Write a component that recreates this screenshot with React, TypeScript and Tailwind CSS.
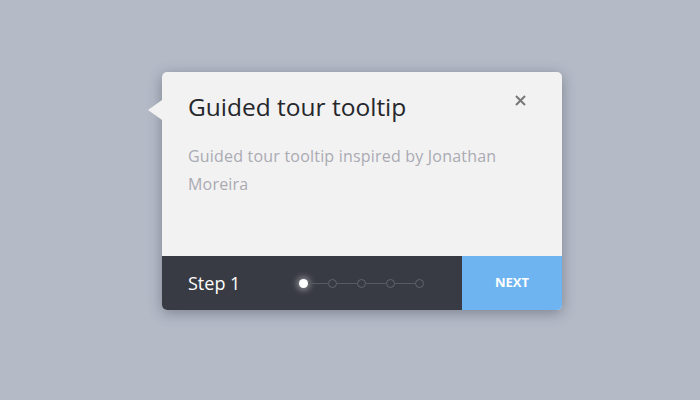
import React from "react";

export default function App() {
  const dots = [0, 1, 2, 3, 4];
  return (
    <div className="w-[700px] h-[400px] bg-[#b5bac7] flex items-start pl-[162px] pt-[72px]" style={{ fontFamily: "'Open Sans', Lato, sans-serif" }}>
      <div className="relative w-[400px] h-[238px] rounded-[5px] bg-[#f2f2f2] shadow-[0_3px_14px_rgba(60,65,80,0.45)] flex flex-col">
        <div className="absolute left-[-14px] top-[28px] w-0 h-0 border-y-[10px] border-y-transparent border-r-[14px] border-r-[#f2f2f2]" />
        <div className="flex-1 relative px-[26px] pt-[19px]">
          <div className="text-[24.5px] leading-[32px] text-[#26272c]">Guided tour tooltip</div>
          <div className="mt-[19px] text-[16px] leading-[28px] text-[#aaaab2] w-[330px] tracking-[0.2px]">
            Guided tour tooltip inspired by Jonathan Moreira
          </div>
          <svg className="absolute left-[353px] top-[23px]" width="11" height="11" viewBox="0 0 11 11">
            <path d="M1 1 L10 10 M10 1 L1 10" stroke="#777" strokeWidth="2" />
          </svg>
        </div>
        <div className="h-[54px] flex rounded-b-[5px] overflow-hidden">
          <div className="flex-1 bg-[#393b44] flex items-center pl-[26px]">
            <span className="text-white text-[18px] w-[111px]">Step 1</span>
            <div className="flex items-center">
              {dots.map((d) => (
                <React.Fragment key={d}>
                  {d > 0 && <div className="w-[20px] h-px bg-[#585a63]" />}
                  <div
                    className={
                      d === 0
                        ? "w-[9px] h-[9px] rounded-full bg-white shadow-[0_0_6px_2px_rgba(255,255,255,0.45)]"
                        : "w-[9px] h-[9px] rounded-full border border-[#62646d]"
                    }
                  />
                </React.Fragment>
              ))}
            </div>
          </div>
          <div className="w-[100px] bg-[#6db4f1] flex items-center justify-center text-white text-[13px] font-bold">NEXT</div>
        </div>
      </div>
    </div>
  );
}
